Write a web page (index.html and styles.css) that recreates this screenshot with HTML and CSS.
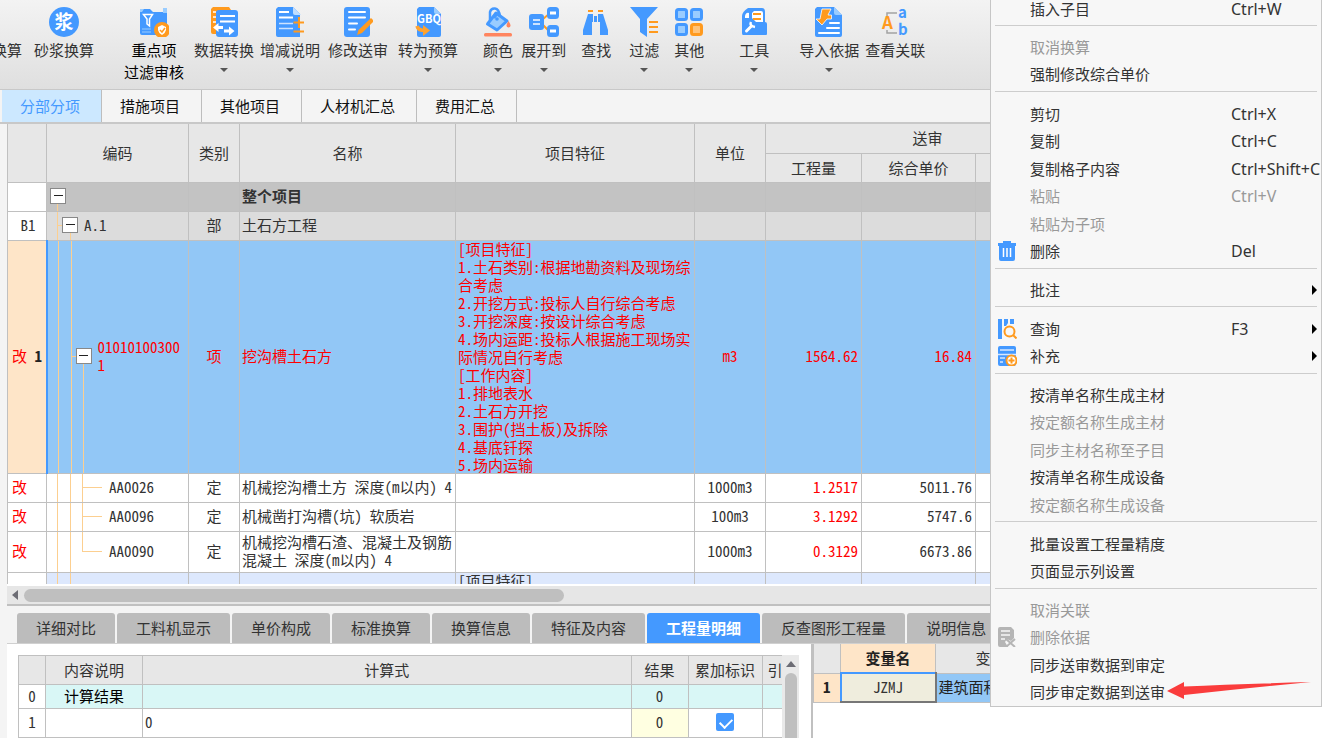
FILE: index.html
```html
<!DOCTYPE html>
<html lang="zh-CN">
<head>
<meta charset="utf-8">
<title>分部分项</title>
<link rel="stylesheet" href="styles.css">
</head>
<body>
<div class="app">
  <div class="ribbon">
    <button class="tool first"><span class="icon"></span><span>换算</span></button>
    <button class="tool gap-12">
      <svg class="icon" viewBox="0 0 30 30"><circle cx="15" cy="15" r="15" fill="#49f"/><text x="15" y="22" font-size="19" font-weight="700" text-anchor="middle" fill="#fff">浆</text></svg>
      <span>砂浆换算</span></button>
    <button class="tool strong gap-30">
      <svg class="icon" viewBox="0 0 30 30"><path fill="#49f" d="M3 2h8l3 3h14v23H3a2 2 0 0 1-2-2V3z"/><path fill="#9cf" d="M1 2h4L3 5H1zM24 1h4v5h-4z"/><path fill="none" stroke="#fff" stroke-width="1.5" d="M4.500 7.500h9L10.500 12v7L8 17v-5z"/><path stroke="#9cf" d="M3 22h9M3 25h9"/><circle cx="23" cy="23" r="8" fill="#ff9a1e"/><path fill="#fff" d="M23 18l4 2v3q-.5 3-4 5q-3.500-2-4-5v-3z"/><path fill="none" stroke="#ff9a1e" stroke-width="1.500" d="M21 23l2 2 3-4"/></svg>
      <span>重点项<br>过滤审核</span></button>
    <button class="tool gap-10">
      <svg class="icon" viewBox="0 0 30 30"><path fill="#ff9a1e" d="M4 0h16l2 3-14 3v21H4a2 2 0 0 1-2-2V2z"/><path stroke="#fff" stroke-width="1.500" d="M4 5h3M4 10h3M4 15h3"/><rect x="7" y="3" width="22" height="27" rx="3" fill="#49f"/><path stroke="#fff" stroke-width="2" d="M11 9h15M11 14.500h15"/><path fill="#fff" d="M4 20.500L9.500 16v3H14v3H9.500v3zM25.500 24L20 19.500v3h-5v3h5v3z"/></svg>
      <span>数据转换</span><i class="caret"></i></button>
    <button class="tool gap-6">
      <svg class="icon" viewBox="0 0 30 30"><path fill="#49f" d="M3 0h15l7 7v23H3a2 2 0 0 1-2-2V2z"/><path fill="#bfddff" d="M18 0l8 8h-6a2 2 0 0 1-2-2z"/><path stroke="#fff" stroke-width="2" d="M4 5h10M4 10.500h14"/><path stroke="#cde3ff" stroke-width="1.500" d="M4 16.500h14M4 21.500h14"/><path stroke="#ff9a1e" stroke-width="2" d="M18.500 15.500H29M24 10v11M18.500 24.500H29"/></svg>
      <span>增减说明</span><i class="caret"></i></button>
    <button class="tool gap-8">
      <svg class="icon" viewBox="0 0 30 30"><rect x="1" width="26" height="30" rx="3" fill="#49f"/><path stroke="#fff" stroke-width="2" stroke-linecap="round" d="M6 5h16M6 10.500h16M6 16.500h8M6 22.500h6"/><path fill="#ff9a1e" d="M28 11l3 3-12 12-5 2 1.500-5z"/></svg>
      <span>修改送审</span></button>
    <button class="tool gap-10">
      <svg class="icon" viewBox="0 0 30 30"><path fill="#49f" d="M6 0h15l7 7v21a2 2 0 0 1-2 2H6a2 2 0 0 1-2-2V2z"/><path fill="#9cf" d="M21 0l7 7h-5a2 2 0 0 1-2-2z"/><text x="16" y="16" font-size="11" font-weight="700" text-anchor="middle" fill="#fff">GBQ</text><path fill="none" stroke="#ffa22e" stroke-width="3.500" d="M4 19q1 4.500 8 4.500"/><path fill="#ffa22e" d="M10 18l7 5.500-7 5.500z"/></svg>
      <span>转为预算</span><i class="caret"></i></button>
    <button class="tool gap-25">
      <svg class="icon" viewBox="0 0 30 30"><path fill="#9cf" stroke="#49f" stroke-width="3" stroke-linejoin="round" d="M13 6l11 8-10 9L4.500 17z"/><path fill="none" stroke="#49f" stroke-width="2.500" d="M7 13L7 5q1-4 5-3.500t5 8M11 11l4-5"/><circle cx="14" cy="12" r="1.800" fill="#49f"/><path fill="#ff855f" d="M25.500 14q4 6 0 6.500-4-.5 0-6.500"/><rect x="1" y="26" width="28" height="3.500" rx="1.500" fill="#ff855f"/></svg>
      <span>颜色</span><i class="caret"></i></button>
    <button class="tool gap-8">
      <svg class="icon" viewBox="0 0 30 30"><path fill="none" stroke="#ff9a1e" stroke-width="2" d="M14 12l6-5M14 18l6 6"/><rect y="7" width="15" height="16" rx="3" fill="#49f"/><path stroke="#cde3ff" stroke-width="2" d="M4 13h7M4 17h7"/><rect x="19.500" y="1.500" width="9" height="9" rx="2" fill="#fff" stroke="#49f" stroke-width="3"/><path stroke="#49f" stroke-width="3" d="M20 3h8M20 9h8"/><rect x="19.500" y="19.500" width="9" height="9" rx="2" fill="#fff" stroke="#49f" stroke-width="3"/><path stroke="#49f" stroke-width="3" d="M20 21h8M20 27h8"/></svg>
      <span>展开到</span><i class="caret"></i></button>
    <button class="tool gap-15">
      <svg class="icon" viewBox="0 0 30 30"><path fill="#ff9a1e" d="M7 3h5v2H7zM17 3h5v2h-5z"/><path fill="#49f" d="M7 7h5v8h-1v13H2V23zM17 7h5l5 16v5h-8V15h-2zM13 9h3v6h-3z"/></svg>
      <span>查找</span></button>
    <button class="tool gap-18">
      <svg class="icon" viewBox="0 0 30 30"><path fill="#49f" d="M1 0h28L18 12v18l-7-5V12z"/><path stroke="#ff9a1e" stroke-width="2.200" d="M20 15h9M20 20h9M20 25h9"/></svg>
      <span>过滤</span><i class="caret"></i></button>
    <button class="tool gap-15">
      <svg class="icon" viewBox="0 0 30 30" stroke-width="3"><g fill="#9cf" stroke="#49f"><rect x="2.500" y="2.500" width="10" height="10" rx="2"/><rect x="17.500" y="2.500" width="10" height="10" rx="2"/><rect x="2.500" y="17.500" width="10" height="10" rx="2"/></g><rect x="17.500" y="17.500" width="10" height="10" rx="2" fill="#ffc37a" stroke="#ff9a1e"/></svg>
      <span>其他</span><i class="caret"></i></button>
    <button class="tool gap-35">
      <svg class="icon" viewBox="0 0 30 30"><path fill="#49f" d="M9 1h14q3 0 3 4v10q2 0 2 2v10q0 1-1 1H4q-1 0-1-2V9q0-2 1.500-4T9 1"/><path fill="#fff" d="M15 4h7a2 2 0 0 1 2 2v9h-7l-4-4V6z"/><path stroke="#ff9a1e" stroke-width="2" d="M14 7h8M14 12h8"/><path fill="#fff" d="M6 9q1-4 4-3v5H6z"/><path stroke="#fff" stroke-width="3" stroke-linecap="round" d="M7.500 24l5-5"/><path fill="none" stroke="#fff" stroke-width="2.500" d="M12 15q-2 4 4 5"/></svg>
      <span>工具</span><i class="caret"></i></button>
    <button class="tool gap-30">
      <svg class="icon" viewBox="0 0 30 30"><path fill="#49f" d="M3 0h17l8 8v20a2 2 0 0 1-2 2H3a2 2 0 0 1-2-2V2z"/><path fill="#9cf" d="M20 0l8 8h-6a2 2 0 0 1-2-2z"/><path stroke="#fff" stroke-width="2" stroke-linecap="round" d="M16 16h9M13 21h12M5 26h20"/><path fill="#ff9a1e" stroke="#fff" stroke-width=".8" d="M8 2h9l-3 6h3.500v4H13l-5 6-6-6h4z"/></svg>
      <span>导入依据</span><i class="caret"></i></button>
    <button class="tool gap-6">
      <svg class="icon" viewBox="0 0 30 30" font-weight="700"><path fill="none" stroke="#a3a3a3" stroke-width="1.500" d="M7 10V6h10M7 23v3h10"/><text x="2" y="22" font-size="17" fill="#ff9a1e">A</text><text x="18" y="11" font-size="15" fill="#49f">a</text><text x="18" y="28" font-size="15" fill="#49f">b</text></svg>
      <span>查看关联</span></button>
  </div>

  <nav class="tabs">
    <button class="tab active">分部分项</button><button class="tab">措施项目</button><button class="tab">其他项目</button><button class="tab">人材机汇总</button><button class="tab">费用汇总</button>
  </nav>

  <div class="grid-wrap">
    <table class="grid">
      <colgroup><col class="w-mark"><col class="w-code"><col class="w-type"><col class="w-name"><col class="w-feature"><col class="w-unit"><col class="w-qty"><col class="w-price"><col class="w-price"><col></colgroup>
      <thead>
        <tr><th rowspan="2"></th><th rowspan="2">编码</th><th rowspan="2">类别</th><th rowspan="2">名称</th><th rowspan="2">项目特征</th><th rowspan="2">单位</th><th colspan="3">送审</th><th rowspan="2"></th></tr>
        <tr><th>工程量</th><th>综合单价</th><th></th></tr>
      </thead>
      <tbody>
        <tr class="root"><td class="mark"></td><td class="lv0"><div class="tree"><button class="fold" aria-label="折叠"></button></div></td><td></td><td><b>整个项目</b></td><td></td><td></td><td></td><td></td><td></td><td></td></tr>
        <tr class="part"><td class="mark mid">B1</td><td class="lv1"><div class="tree"><button class="fold" aria-label="折叠"></button><span>A.1</span></div></td><td class="mid">部</td><td>土石方工程</td><td></td><td></td><td></td><td></td><td></td><td></td></tr>
        <tr class="selected red"><td class="mark">改 <b class="dark">1</b></td><td class="lv2"><div class="tree"><button class="fold" aria-label="折叠"></button><span class="code">010101003001</span></div></td><td class="mid">项</td><td>挖沟槽土石方</td>
          <td class="feature"><div class="notes">[项目特征]<br>1.土石类别:根据地勘资料及现场综合考虑<br>2.开挖方式:投标人自行综合考虑<br>3.开挖深度:按设计综合考虑<br>4.场内运距:投标人根据施工现场实际情况自行考虑<br>[工作内容]<br>1.排地表水<br>2.土石方开挖<br>3.围护(挡土板)及拆除<br>4.基底钎探<br>5.场内运输</div></td>
          <td class="mid">m3</td><td class="num">1564.62</td><td class="num">16.84</td><td></td><td></td></tr>
        <tr><td class="mark red">改</td><td class="lv3"><div class="tree">AA0026</div></td><td class="mid">定</td><td>机械挖沟槽土方 深度(m以内) 4</td><td></td><td class="mid">1000m3</td><td class="num red">1.2517</td><td class="num">5011.76</td><td></td><td></td></tr>
        <tr><td class="mark red">改</td><td class="lv3"><div class="tree">AA0096</div></td><td class="mid">定</td><td>机械凿打沟槽(坑) 软质岩</td><td></td><td class="mid">100m3</td><td class="num red">3.1292</td><td class="num">5747.6</td><td></td><td></td></tr>
        <tr class="tall"><td class="mark red">改</td><td class="lv3 last"><div class="tree">AA0090</div></td><td class="mid">定</td><td>机械挖沟槽石渣、混凝土及钢筋混凝土 深度(m以内) 4</td><td></td><td class="mid">1000m3</td><td class="num red">0.3129</td><td class="num">6673.86</td><td></td><td></td></tr>
        <tr class="next"><td class="mark"></td><td class="lines"></td><td></td><td></td><td class="feature"><div class="notes">[项目特征]</div></td><td></td><td></td><td></td><td></td><td></td></tr>
      </tbody>
    </table>
  </div>
  <div class="hscroll"><i class="arrow-left"></i><div class="hthumb"></div></div>

  <section class="detail">
    <nav class="subtabs">
      <button class="subtab">详细对比</button><button class="subtab">工料机显示</button><button class="subtab">单价构成</button><button class="subtab">标准换算</button><button class="subtab">换算信息</button><button class="subtab">特征及内容</button><button class="subtab active">工程量明细</button><button class="subtab">反查图形工程量</button><button class="subtab">说明信息</button>
    </nav>
    <div class="panes">
      <div class="calc">
        <table class="calc-table">
          <colgroup><col class="c-no"><col class="c-desc"><col><col class="c-result"><col class="c-flag"><col class="c-ref"></colgroup>
          <thead><tr><th></th><th>内容说明</th><th>计算式</th><th>结果</th><th>累加标识</th><th class="ref">引</th></tr></thead>
          <tbody>
            <tr class="sum"><td class="mid no">0</td><td class="mid total">计算结果</td><td></td><td class="mid">0</td><td></td><td></td></tr>
            <tr><td class="mid">1</td><td></td><td>0</td><td class="mid result">0</td><td class="mid"><input type="checkbox" class="check" checked aria-label="累加标识"></td><td></td></tr>
          </tbody>
        </table>
        <div class="vscroll"><i class="arrow-up"></i><div class="vthumb"></div></div>
      </div>
      <div class="vars">
        <table class="var-table">
          <colgroup><col class="v-no"><col class="v-name"><col class="v-desc"><col></colgroup>
          <thead><tr><th></th><th class="hot">变量名</th><th>变量说明</th><th></th></tr></thead>
          <tbody><tr><td class="mid hot">1</td><td class="mid focus">JZMJ</td><td class="blue">建筑面积</td><td class="blue"></td></tr></tbody>
        </table>
      </div>
    </div>
  </section>
</div>

<div class="menu">
  <ul><li><button class="item"><span class="label">插入子目</span><span class="key">Ctrl+W</span></button></li></ul>
  <ul>
    <li><button class="item" disabled><span class="label">取消换算</span></button></li>
    <li><button class="item"><span class="label">强制修改综合单价</span></button></li>
  </ul>
  <ul>
    <li><button class="item"><span class="label">剪切</span><span class="key">Ctrl+X</span></button></li>
    <li><button class="item"><span class="label">复制</span><span class="key">Ctrl+C</span></button></li>
    <li><button class="item"><span class="label">复制格子内容</span><span class="key">Ctrl+Shift+C</span></button></li>
    <li><button class="item" disabled><span class="label">粘贴</span><span class="key">Ctrl+V</span></button></li>
    <li><button class="item" disabled><span class="label">粘贴为子项</span></button></li>
    <li><button class="item"><svg class="mi" viewBox="0 0 20 20"><path fill="#49f" d="M6 2V0h8v2h5v3h-1v13q0 2-2 2H4q-2 0-2-2V5H1V2z"/><path stroke="#fff" stroke-width="1.500" d="M6.500 7v9M10 7v9M13.500 7v9"/></svg><span class="label">删除</span><span class="key">Del</span></button></li>
  </ul>
  <ul><li><button class="item sub"><span class="label">批注</span></button></li></ul>
  <ul>
    <li><button class="item sub"><svg class="mi" viewBox="0 0 20 20"><path fill="#49f" d="M1 0h4v20H1zM7 0h4v4L9 7H7zM13 0h4v5h-4z"/><circle cx="12.500" cy="12.500" r="5" fill="none" stroke="#ff9a1e" stroke-width="2"/><path stroke="#ff9a1e" stroke-width="2" d="M16 16l3.500 3.500"/></svg><span class="label">查询</span><span class="key">F3</span></button></li>
    <li><button class="item sub"><svg class="mi" viewBox="0 0 20 20"><rect x="1" width="18" height="20" rx="2" fill="#49f"/><path stroke="#d6e8ff" stroke-width="1.500" d="M3 4h14M1 8.500h18M3 12h5M3 16h3"/><circle cx="14.500" cy="14.500" r="5" fill="#fff" stroke="#ff9a1e" stroke-width="2"/><path stroke="#ff9a1e" stroke-width="2" d="M11.500 14.500h6M14.500 11.500v6"/></svg><span class="label">补充</span></button></li>
  </ul>
  <ul>
    <li><button class="item"><span class="label">按清单名称生成主材</span></button></li>
    <li><button class="item" disabled><span class="label">按定额名称生成主材</span></button></li>
    <li><button class="item" disabled><span class="label">同步主材名称至子目</span></button></li>
    <li><button class="item"><span class="label">按清单名称生成设备</span></button></li>
    <li><button class="item" disabled><span class="label">按定额名称生成设备</span></button></li>
  </ul>
  <ul>
    <li><button class="item"><span class="label">批量设置工程量精度</span></button></li>
    <li><button class="item"><span class="label">页面显示列设置</span></button></li>
  </ul>
  <ul>
    <li><button class="item" disabled><span class="label">取消关联</span></button></li>
    <li><button class="item" disabled><svg class="mi" viewBox="0 0 20 20"><path fill="#b5b5b5" d="M3 0h11l3 3v8l-3 3-4-2-2 3 3 5H3q-2 0-2-2V2q0-2 2-2"/><path stroke="#f7f7f7" stroke-width="1.500" d="M4 4h9M4 8h9M4 12h4"/><path stroke="#b5b5b5" stroke-width="2" d="M9 12l9 8M18 12l-9 8"/></svg><span class="label">删除依据</span></button></li>
    <li><button class="item"><span class="label">同步送审数据到审定</span></button></li>
    <li><button class="item"><span class="label">同步审定数据到送审</span><svg class="pointer" viewBox="0 0 146 18"><path fill="#fa3c3c" d="M0 9L17 0v4.500Q70 2 144 0 80 6 17 13v4z"/></svg></button></li>
  </ul>
</div>
</body>
</html>
```
FILE: styles.css
```css
* { box-sizing: border-box; }

body {
  margin: 0;
  overflow: hidden;
  font: 15px/18px "Noto Sans CJK SC", sans-serif;
  color: #333;
  background: #fff;
}

button {
  margin: 0;
  padding: 0;
  border: 0;
  background: none;
  font: inherit;
  color: inherit;
}

.app {
  display: flex;
  flex-direction: column;
  height: 100vh;
  background: #f4f4f4;
}

/* ribbon */
.ribbon {
  display: flex;
  align-items: flex-start;
  height: 90px;
  padding-top: 7px;
  overflow: hidden;
  background: linear-gradient(#f3f3f3, #dfdfdf);
  border-bottom: 1px solid #c8c8c8;
}

.tool {
  display: flex;
  flex: none;
  flex-direction: column;
  align-items: center;
  line-height: 22px;
}

.tool .icon { width: 30px; height: 30px; margin-bottom: 2px; }
.tool.strong { color: #000; }
.tool.first { margin-left: -8px; }

.gap-6 { margin-left: 6px; }
.gap-8 { margin-left: 8px; }
.gap-10 { margin-left: 10px; }
.gap-12 { margin-left: 12px; }
.gap-15 { margin-left: 15px; }
.gap-18 { margin-left: 18px; }
.gap-25 { margin-left: 25px; }
.gap-30 { margin-left: 30px; }
.gap-35 { margin-left: 35px; }

.caret {
  margin-top: 7px;
  border: 4px solid transparent;
  border-top: 4px solid #555;
  border-bottom: 0;
}

/* main tabs */
.tabs {
  display: flex;
  height: 34px;
  padding-left: 2px;
  background: #f4f4f4;
  border-bottom: 2px solid #c8c8c8;
}

.tab {
  padding: 0 21px 0 18px;
  border-right: 1px solid #bdbdbd;
  color: #111;
}

.tab.active { background: #cce8ff; color: #49f; }

/* bill grid */
.grid-wrap {
  flex: 1;
  min-height: 0;
  margin-left: 7px;
  overflow: hidden;
}

table {
  width: 100%;
  table-layout: fixed;
  border-collapse: collapse;
  background: #fff;
}

th, td {
  height: 29px;
  padding: 0 2px;
  border: 1px solid #c0c0c0;
  text-align: left;
}

td {
  padding-bottom: 2px;
  font-family: "Noto Sans Mono CJK SC", "Noto Sans CJK SC", monospace;
}

th { font-weight: 400; text-align: center; background: #e7e7e7; }
thead tr:first-child th { border-top: 0; }

.w-mark { width: 39px; }
.w-code { width: 142px; }
.w-type { width: 51px; }
.w-name { width: 216px; }
.w-feature { width: 239px; }
.w-unit { width: 71px; }
.w-qty { width: 96px; }
.w-price { width: 114px; }

.mid { text-align: center; }
.num { padding-right: 3px; text-align: right; }
.red { color: #f00; }
.dark { color: #222; }
.grid .mark { background: #fff; padding-left: 4px; }
.root td { background: #c3c3c3; }
.part td { background: #dcdcdc; }
.grid .selected td { height: 233px; background-color: #92c7f6; }
.grid .selected .mark { background: #fee5c8; border-right: 2px solid #49f; }
.tall td { height: 41px; }
.next td { background-color: #dde8fd; }
.grid .feature { vertical-align: top; padding-bottom: 0; }
.notes { margin: -1px 0; }

/* tree guides are painted as one-pixel backgrounds at each level */
.tree { display: flex; align-items: center; gap: 6px; }
.code { width: 86px; word-break: break-all; }

.grid .lv0, .grid .lv1, .grid .lv2, .grid .lv3, .grid .lines {
  --line: linear-gradient(#fccf90, #fccf90);
  padding-right: 0;
  background-repeat: no-repeat;
}

.grid .lv0 {
  padding-left: 3px;
  background-image: var(--line);
  background-size: 1px 50%;
  background-position: 10px 100%;
}

.grid .lv1 {
  padding-left: 15px;
  background-image: var(--line), var(--line), var(--line);
  background-size: 1px 100%, 1px 50%, 10px 1px;
  background-position: 10px 0, 23px 100%, 10px 50%;
}

.grid .lv2 {
  padding-left: 28px;
  background-image: var(--line), var(--line), var(--line), var(--line);
  background-size: 1px 100%, 1px 100%, 1px 50%, 10px 1px;
  background-position: 10px 0, 23px 0, 35px 100%, 23px 50%;
}

.grid .lv3 {
  padding-left: 62px;
  background-image: var(--line), var(--line), var(--line), var(--line);
  background-size: 1px 100%, 1px 100%, 1px 100%, 20px 1px;
  background-position: 10px 0, 23px 0, 35px 0, 35px 50%;
}

.grid .lv3.last { background-size: 1px 100%, 1px 100%, 1px 50%, 20px 1px; }

.grid .lines {
  background-image: var(--line), var(--line);
  background-size: 1px 100%;
  background-position: 10px 0, 23px 0;
}

.fold {
  display: flex;
  flex: none;
  align-items: center;
  justify-content: center;
  width: 16px;
  height: 16px;
  border: 1px solid #888;
  background: #fff;
}

.fold::before { content: ""; width: 9px; height: 1px; background: #222; }

.hscroll {
  display: flex;
  align-items: center;
  gap: 6px;
  height: 22px;
  margin-left: 7px;
  padding-left: 5px;
  background: #e6e6e6;
  border-top: 2px solid #fff;
  border-bottom: 2px solid #c0c0c0;
}

.hthumb { width: 540px; height: 13px; border-radius: 7px; background: #bfbfbf; }

.arrow-left {
  border: 5px solid transparent;
  border-right: 6px solid #6d6d75;
  border-left: 0;
}

/* detail panel */
.detail { margin-left: 7px; }

.subtabs {
  display: flex;
  gap: 2px;
  padding: 7px 0 0 10px;
  border-bottom: 1px solid #d0d0d0;
  overflow: hidden;
}

.subtab {
  flex: none;
  height: 30px;
  padding: 0 19px;
  border-radius: 3px 3px 0 0;
  background: #bcbcbc;
}

.subtab.active { background: #49f; color: #fff; font-weight: 700; }

.panes { display: flex; background: #fff; }

.calc { display: flex; flex: none; width: 804px; padding: 11px 12px 0 11px; }
.calc-table { flex: 1; }
.c-no { width: 27px; }
.c-desc { width: 97px; }
.c-result { width: 57px; }
.c-flag { width: 74px; }
.c-ref { width: 20px; }
.calc-table thead tr:first-child th { border-top: 1px solid #c0c0c0; white-space: nowrap; }
.calc-table tr > :last-child { border-right: 0; overflow: hidden; }
.calc-table .ref { padding: 0 0 0 5px; text-align: left; }
.sum td { height: 24px; background: #d9f7f6; }
.sum .no { background: #fff; }
.total { color: #000; font-weight: 500; }
.result { background: #ffffe1; }

.check {
  display: block;
  appearance: none;
  position: relative;
  width: 18px;
  height: 18px;
  margin: 0 auto;
  border-radius: 2px;
  background: #49f;
}

.check::after {
  content: "";
  position: absolute;
  left: 6px;
  top: 3px;
  width: 6px;
  height: 10px;
  border: solid #fff;
  border-width: 0 2px 2px 0;
  transform: rotate(45deg);
}

.vscroll {
  display: flex;
  flex-direction: column;
  align-items: center;
  width: 17px;
  padding-top: 6px;
  background: #e9e9e9;
}

.vthumb { flex: 1; width: 12px; margin-top: 6px; border-radius: 6px 6px 0 0; background: #bfbfbf; }
.arrow-up { border: 5px solid transparent; border-bottom: 6px solid #6d6d75; border-top: 0; }

.vars { flex: 1; min-width: 0; border-left: 2px solid #c0c0c0; }
.v-no { width: 27px; }
.v-name { width: 95px; }
.v-desc { width: 140px; }
.var-table .hot { background: #fee5c8; font-weight: 700; color: #222; }
.var-table .focus { background: #efeddd; border: 2px solid #777; border-top-color: #49f; border-left-color: #49f; }
.blue { background: #92c7f6; color: #222; }

/* context menu */
.menu {
  position: absolute;
  top: -6px;
  right: 0;
  width: 332px;
  background: #f7f7f7;
  border: 1px solid #c6c6c6;
  font-family: "Noto Sans", "Noto Sans CJK SC", sans-serif;
}

.menu ul {
  margin: 0 4px;
  padding: 0 0 3px;
  list-style: none;
}

.menu ul + ul { padding-top: 8px; border-top: 1px solid #cdcdcd; }
.menu ul:nth-child(even) { padding-top: 7px; }
.menu ul:last-child { padding-bottom: 0; }
.menu li { height: 27px; }
.menu li:nth-child(even) { height: 28px; }

.item {
  display: flex;
  align-items: center;
  position: relative;
  width: 100%;
  height: 100%;
  padding-left: 35px;
  text-align: left;
  white-space: nowrap;
}

.item:disabled { color: #999; }
.label { flex: none; width: 201px; }
.key { font-size: 16px; }
.mi { flex: none; width: 20px; height: 20px; margin: 0 13px 0 -33px; }

.sub::after {
  content: "";
  margin-left: auto;
  border: 5px solid transparent;
  border-left: 5px solid #000;
  border-right: 0;
}

.pointer { position: absolute; left: 172px; bottom: 6px; width: 146px; height: 18px; }
```
